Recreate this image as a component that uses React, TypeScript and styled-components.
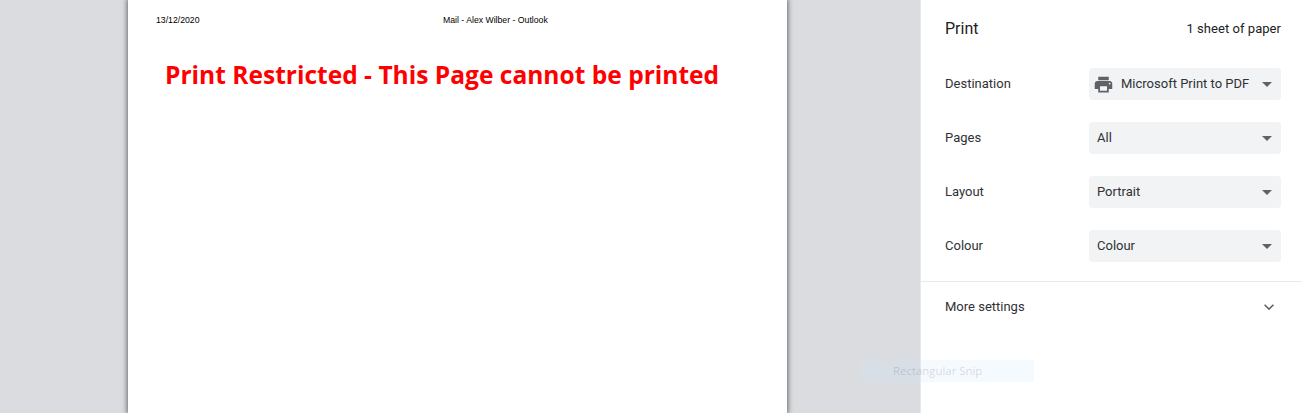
import React from 'react';
import styled, { createGlobalStyle } from 'styled-components';

const GlobalStyle = createGlobalStyle`
  html, body {
    margin: 0;
    padding: 0;
    width: 100%;
    height: 100%;
    overflow: hidden;
    background: #fff;
  }
`;

const Screen = styled.div`
  position: relative;
  display: flex;
  width: 1302px;
  height: 413px;
  overflow: hidden;
  font-family: Roboto, 'Liberation Sans', sans-serif;
`;

const Preview = styled.main`
  flex: 0 0 920px;
  background: #dadce0;
  padding-left: 128px;
  box-sizing: border-box;
`;

const Sheet = styled.div`
  width: 659px;
  height: 413px;
  box-sizing: border-box;
  background: #fff;
  box-shadow: 0 0 5px 1px rgba(60, 64, 67, 0.75);
  padding: 15px 28px 0 28px;
`;

const SheetHeader = styled.div`
  display: grid;
  grid-template-columns: 287px auto;
  font-family: 'Liberation Sans', Arial, sans-serif;
  font-size: 8.7px;
  line-height: 10px;
  color: #000;
`;

const Restricted = styled.h1`
  margin: 30px 0 0 9px;
  font-family: 'Open Sans', 'Noto Sans', sans-serif;
  font-size: 24.55px;
  line-height: 40px;
  font-weight: 700;
  color: #ff0000;
  white-space: nowrap;
`;

const Sidebar = styled.aside`
  flex: 1;
  background: #fff;
  border-left: 1px solid #e8e9ed;
  color: #202124;
`;

const Head = styled.div`
  display: flex;
  justify-content: space-between;
  align-items: center;
  height: 56px;
  padding: 0 21px 0 24px;
`;

const Title = styled.h2`
  margin: 0;
  font-size: 16px;
  font-weight: 400;
`;

const SheetCount = styled.span`
  font-size: 13px;
  letter-spacing: 0.05px;
`;

const Settings = styled.div`
  display: flex;
  flex-direction: column;
  gap: 22px;
  padding: 12px 21px 19px 24px;
  border-bottom: 1px solid #e8eaed;
`;

const Label = styled.span`
  font-size: 13px;
  color: #303236;
`;

const Row = styled.div`
  display: flex;
  justify-content: space-between;
  align-items: center;
  height: 32px;

  ${Label} {
    padding-bottom: 2px;
  }
`;

const Select = styled.div`
  display: flex;
  align-items: center;
  width: 192px;
  height: 32px;
  box-sizing: border-box;
  padding: 0 8px;
  border-radius: 4px;
  background: #f1f3f4;
  font-size: 13px;
  color: #303236;
`;

const Value = styled.span`
  flex: 1;
  padding-bottom: 2px;
  white-space: nowrap;
`;

const PrinterGlyph = styled.svg`
  flex: none;
  width: 21px;
  height: 21px;
  margin: 0 7px 0 -4px;
  fill: #5f6368;
`;

const Caret = styled.span`
  flex: none;
  margin-right: 1px;
  width: 0;
  height: 0;
  border-left: 5px solid transparent;
  border-right: 5px solid transparent;
  border-top: 5px solid #5f6368;
`;

const MoreRow = styled.div`
  display: flex;
  justify-content: space-between;
  align-items: center;
  height: 49px;
  padding: 0 24px;
`;

const Chevron = styled.svg`
  width: 20px;
  height: 20px;
  margin: 0 -1px 0 0;
  fill: #5f6368;
`;

// ghost of the snipping tool menu, fading out over the page
const SnipGhost = styled.div`
  position: absolute;
  left: 861px;
  top: 360px;
  width: 173px;
  height: 22px;
  padding-left: 32px;
  box-sizing: border-box;
  background: rgba(205, 232, 255, 0.2);
  font-family: 'Open Sans', 'Noto Sans', sans-serif;
  font-size: 11.4px;
  line-height: 22px;
  color: rgba(60, 50, 60, 0.18);
  white-space: nowrap;
`;

const rows = [
  { label: 'Destination', value: 'Microsoft Print to PDF', printer: true },
  { label: 'Pages', value: 'All' },
  { label: 'Layout', value: 'Portrait' },
  { label: 'Colour', value: 'Colour' },
];

const App = () => (
  <Screen>
    <GlobalStyle />
    <Preview>
      <Sheet>
        <SheetHeader>
          <span>13/12/2020</span>
          <span>Mail - Alex Wilber - Outlook</span>
        </SheetHeader>
        <Restricted>Print Restricted - This Page cannot be printed</Restricted>
      </Sheet>
    </Preview>
    <Sidebar>
      <Head>
        <Title>Print</Title>
        <SheetCount>1 sheet of paper</SheetCount>
      </Head>
      <Settings>
        {rows.map((row) => (
          <Row key={row.label}>
            <Label>{row.label}</Label>
            <Select>
              {row.printer && (
                <PrinterGlyph viewBox="0 0 24 24">
                  <path d="M19 8H5c-1.66 0-3 1.34-3 3v6h4v4h12v-4h4v-6c0-1.66-1.34-3-3-3zm-3 11H8v-5h8v5zm3-7c-.55 0-1-.45-1-1s.45-1 1-1 1 .45 1 1-.45 1-1 1zm-1-9H6v4h12V3z" />
                </PrinterGlyph>
              )}
              <Value>{row.value}</Value>
              <Caret />
            </Select>
          </Row>
        ))}
      </Settings>
      <MoreRow>
        <Label>More settings</Label>
        <Chevron viewBox="0 0 24 24">
          <path d="M7.41 8.59 12 13.17l4.59-4.58L18 10l-6 6-6-6z" />
        </Chevron>
      </MoreRow>
    </Sidebar>
    <SnipGhost>Rectangular Snip</SnipGhost>
  </Screen>
);

export default App;
